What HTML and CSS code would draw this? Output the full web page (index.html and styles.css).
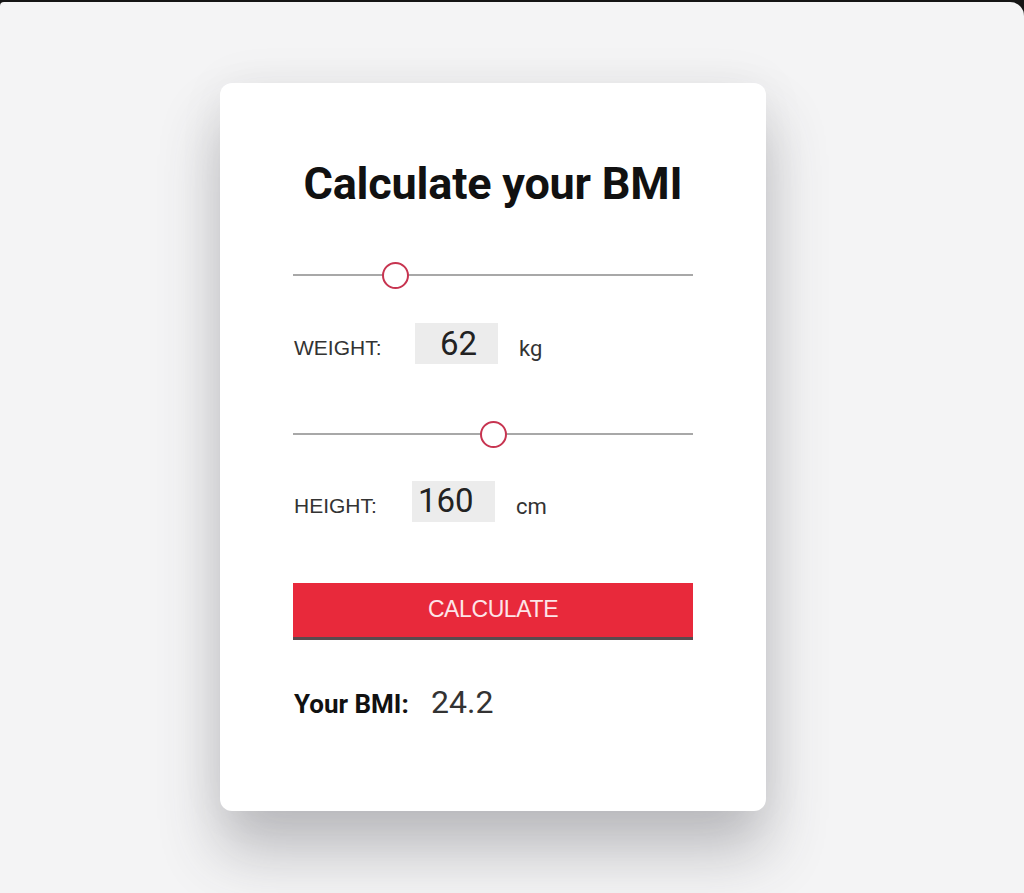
FILE: index.html
```html
<!DOCTYPE html>
<html lang="en">
<head>
<meta charset="utf-8">
<title>BMI Calculator</title>
<link rel="stylesheet" href="styles.css">
</head>
<body>
<div class="frame">
  <div class="card">
    <h1 class="title">Calculate your BMI</h1>

    <input class="slider slider-weight" type="range" min="0" max="260" value="62">
    <div class="row row-weight">
      <span class="label">WEIGHT:</span>
      <span class="value">62</span>
      <span class="unit">kg</span>
    </div>

    <input class="slider slider-height" type="range" min="100" max="220" value="160">
    <div class="row row-height">
      <span class="label">HEIGHT:</span>
      <span class="value value-left">160</span>
      <span class="unit">cm</span>
    </div>

    <button class="btn" type="button">CALCULATE</button>

    <div class="result">
      <span class="result-label">Your BMI:</span>
      <span class="result-value">24.2</span>
    </div>
  </div>
</div>
</body>
</html>
```
FILE: styles.css
```css
html, body {
  margin: 0;
  padding: 0;
  height: 100%;
}
body {
  background: #151515;
  overflow: hidden;
}
.frame {
  margin-top: 2px;
  height: 891px;
  background: #f4f4f5;
  border-radius: 4px 14px 0 0;
  box-sizing: border-box;
  padding-top: 81px;
  padding-left: 220px;
}
.card {
  width: 546px;
  height: 728px;
  box-sizing: border-box;
  background: #fff;
  border-radius: 12px;
  box-shadow: 0 40px 60px rgba(60, 60, 70, 0.3), 0 0 50px rgba(0, 0, 0, 0.05);
  padding: 60px 73px 0 73px;
  font-family: Roboto, "Liberation Sans", sans-serif;
  color: #222;
}
.title {
  margin: 0;
  text-align: center;
  font-family: Roboto, sans-serif;
  font-weight: 700;
  font-size: 45px;
  line-height: 82px;
  color: #111;
  letter-spacing: -0.2px;
}
.slider {
  -webkit-appearance: none;
  appearance: none;
  display: block;
  width: 400px;
  height: 28px;
  margin: 0;
  padding: 0;
  background: transparent;
}
.slider-weight { margin-top: 36px; }
.slider-height { margin-top: 56px; }
.slider::-webkit-slider-runnable-track {
  height: 2px;
  background: #a8a8a8;
}
.slider::-webkit-slider-thumb {
  -webkit-appearance: none;
  appearance: none;
  width: 27px;
  height: 27px;
  box-sizing: border-box;
  border: 2.5px solid #c73450;
  border-radius: 50%;
  background: #fff;
  margin-top: -12.5px;
}
.row {
  display: flex;
  align-items: center;
  height: 41px;
  margin-top: 34px;
}
.row-height { margin-top: 33px; }
.label {
  font-family: "Liberation Sans", Arial, sans-serif;
  font-size: 21px;
  color: #333;
  padding-left: 1px;
  padding-top: 9px;
}
.row-weight .label { width: 121px; }
.row-height .label { width: 118px; }
.value {
  width: 83px;
  height: 41px;
  background: #ececec;
  font-family: Roboto, sans-serif;
  font-size: 33px;
  line-height: 41px;
  color: #222;
  text-align: center;
  box-sizing: border-box;
  padding-left: 4px;
}
.value-left {
  text-align: left;
  padding-left: 6px;
  line-height: 39px;
}
.unit {
  margin-left: 21px;
  font-family: Roboto, sans-serif;
  font-size: 22px;
  color: #333;
  padding-top: 9px;
}
.btn {
  display: block;
  width: 400px;
  height: 57px;
  margin: 61px 0 0 0;
  padding: 0 0 2px 0;
  border: none;
  border-bottom: 3px solid #5a4a4e;
  background: #e8293b;
  color: #fde4e8;
  font-family: "Liberation Sans", Arial, sans-serif;
  font-size: 23px;
  letter-spacing: -0.4px;
  cursor: pointer;
}
.result {
  display: flex;
  align-items: baseline;
  margin-top: 43px;
}
.result-label {
  font-family: Roboto, sans-serif;
  font-weight: 700;
  font-size: 26px;
  color: #111;
  padding-left: 1px;
  width: 137px;
}
.result-value {
  font-family: Roboto, sans-serif;
  font-size: 32px;
  color: #333;
}
```
